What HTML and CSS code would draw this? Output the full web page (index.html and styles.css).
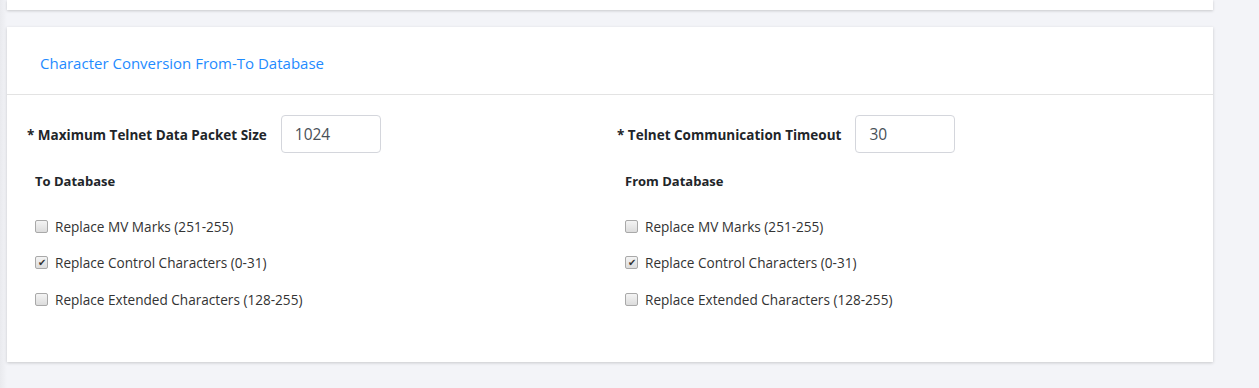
FILE: index.html
```html
<!DOCTYPE html>
<html lang="en">
  <head>
    <meta charset="UTF-8" />
    <title>Telnet Settings</title>
    <link rel="stylesheet" href="styles.css">
  </head>
  <body>
    <div class="page">
      <div class="card card_top"></div>

      <div class="card">
        <div class="card_header">
          <a class="card_title" href="#">Character Conversion From-To Database</a>
        </div>
        <div class="card_body">
          <div class="column">
            <div class="field">
              <label for="packet">* Maximum Telnet Data Packet Size</label>
              <input id="packet" type="text" value="1024" />
            </div>
            <h4 class="group_title">To Database</h4>
            <label class="check"><input type="checkbox" /><span>Replace MV Marks (251-255)</span></label>
            <label class="check"><input type="checkbox" checked /><span>Replace Control Characters (0-31)</span></label>
            <label class="check"><input type="checkbox" /><span>Replace Extended Characters (128-255)</span></label>
          </div>

          <div class="column">
            <div class="field">
              <label for="timeout">* Telnet Communication Timeout</label>
              <input id="timeout" type="text" value="30" />
            </div>
            <h4 class="group_title">From Database</h4>
            <label class="check"><input type="checkbox" /><span>Replace MV Marks (251-255)</span></label>
            <label class="check"><input type="checkbox" checked /><span>Replace Control Characters (0-31)</span></label>
            <label class="check"><input type="checkbox" /><span>Replace Extended Characters (128-255)</span></label>
          </div>
        </div>
      </div>
    </div>
  </body>
</html>
```

FILE: styles.css
```css
* {
  margin: 0;
  padding: 0;
  box-sizing: border-box;
}

body {
  background: #f3f4f8;
  font-family: "Open Sans", "Noto Sans", sans-serif;
  color: #212529;
  height: 388px;
  overflow: hidden;
}

.page {
  padding: 0 46px 0 7px;
  background: linear-gradient(to right, #e9eaee 0, #f3f4f8 7px);
  height: 100%;
}

.card {
  background: white;
  box-shadow: 0 1px 3px rgba(0, 0, 0, 0.18);
  margin-bottom: 17px;
}

.card_top {
  height: 10px;
}

.card_header {
  height: 68px;
  display: flex;
  align-items: center;
  padding: 4px 0 0 33px;
  border-bottom: 1px solid #e3e3e3;

  .card_title {
    color: #1f8bff;
    font-size: 15px;
    text-decoration: none;
  }
}

.card_body {
  display: grid;
  grid-template-columns: 590px 1fr;
  padding: 20px 20px 35px;

  .column {
    display: flex;
    flex-direction: column;
  }

  .field {
    display: flex;
    align-items: center;
    gap: 14px;

    > label {
      font-weight: bold;
      font-size: 13.5px;
      padding-top: 2px;
    }

    > input {
      width: 100px;
      height: 38px;
      border: 1px solid #d4d6dc;
      border-radius: 4px;
      padding-left: 13px;
      font-family: inherit;
      font-size: 15.5px;
      color: #495057;
      outline: none;
    }
  }

  .group_title {
    font-size: 13px;
    font-weight: bold;
    margin: 19px 0 27px 8px;
    line-height: 18px;
  }

  .check {
    display: flex;
    align-items: center;
    gap: 7px;
    margin-left: 8px;
    height: 18px;
    margin-bottom: 18.5px;
    font-size: 13.6px;
    color: #333;

    > input {
      appearance: none;
      width: 13px;
      height: 13px;
      border: 1px solid #a9a9a9;
      border-radius: 2px;
      background: linear-gradient(#f4f4f4, #dcdcdc);
      display: grid;
      place-items: center;

      &:checked::after {
        content: "\2714";
        font-size: 10px;
        line-height: 1;
        color: #333;
      }
    }
  }
}
```
